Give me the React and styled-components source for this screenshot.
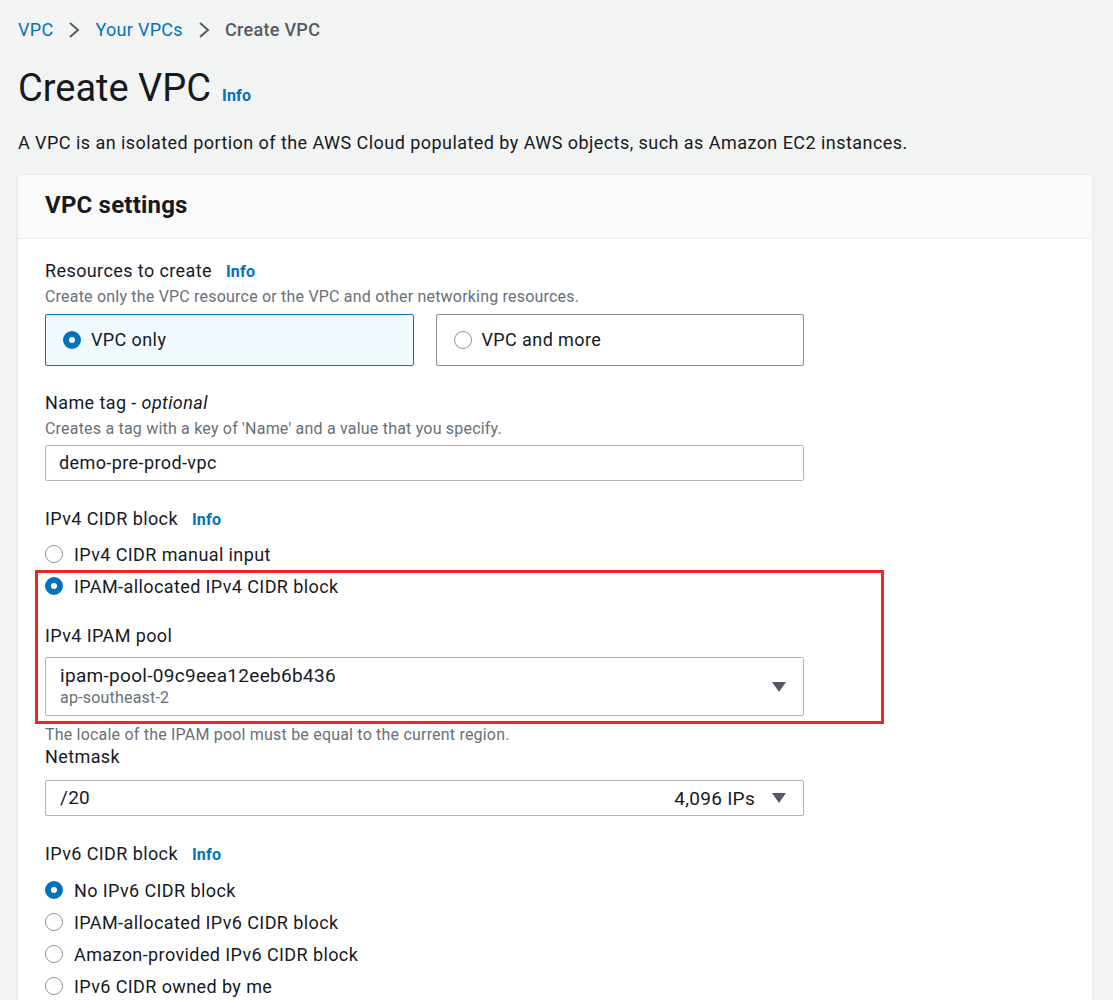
import React from 'react';
import styled, { createGlobalStyle } from 'styled-components';

const GlobalStyle = createGlobalStyle`
  body {
    margin: 0;
    background: #f2f3f3;
    font-family: Roboto, "Liberation Sans", Arial, sans-serif;
    color: #16191f;
  }
`;

const Page = styled.div`
  padding: 19px 20px 0 17px;
`;

const Crumbs = styled.nav`
  display: flex;
  align-items: center;
  gap: 12px;
  font-size: 18px;
  line-height: 22px;
  letter-spacing: 0.3px;
  padding-left: 1px;
`;

const Crumb = styled.span`
  color: ${p => (p.current ? '#545b64' : '#0073bb')};
  font-weight: ${p => (p.current ? 500 : 400)};
`;

const Chevron = styled.svg`
  width: 14px;
  height: 18px;
  margin: 0 2px;
`;

const TitleRow = styled.div`
  display: flex;
  align-items: baseline;
  gap: 11px;
  margin-top: 25px;
  padding-left: 1px;
`;

const Title = styled.h1`
  margin: 0;
  font-size: 38px;
  line-height: 44px;
  font-weight: 400;
`;

const Info = styled.span`
  color: #0073bb;
  font-weight: 700;
  font-size: 16px;
  letter-spacing: 0.2px;
  margin-left: ${p => p.gap || 0}px;
`;

const Lead = styled.p`
  margin: 21px 0 0 1px;
  font-size: 18px;
  line-height: 24px;
  letter-spacing: 0.45px;
`;

const Card = styled.section`
  margin-top: 19px;
  background: #fff;
  border: 1px solid #eaeded;
  box-shadow: 0 1px 1px rgba(0, 28, 36, 0.2);
  height: 900px;
`;

const CardHeader = styled.header`
  background: #fafafa;
  border-bottom: 1px solid #eaeded;
  height: 64px;
  box-sizing: border-box;
  display: flex;
  align-items: center;
  padding: 0 0 3px 27px;
`;

const CardTitle = styled.h2`
  margin: 0;
  font-size: 24px;
  font-weight: 700;
  letter-spacing: 0.2px;
`;

const CardBody = styled.div`
  padding: 20px 27px;
  width: 759px;
`;

const Field = styled.div`
  margin-top: ${p => p.top || 0}px;
`;

const Label = styled.div`
  font-size: 18px;
  line-height: 24px;
  letter-spacing: 0.4px;
  display: flex;
  align-items: baseline;
`;

const Desc = styled.div`
  font-size: 16px;
  line-height: 20px;
  letter-spacing: 0.2px;
  color: #687078;
  margin-top: ${p => p.top || 0}px;
`;

const Tiles = styled.div`
  display: grid;
  grid-template-columns: 1fr 1fr;
  gap: 22px;
  margin-top: 7px;
`;

const Tile = styled.div`
  height: 52px;
  box-sizing: border-box;
  border: ${p => (p.selected ? '1px solid #0073bb' : '1px solid #879596')};
  background: ${p => (p.selected ? '#f1faff' : '#fff')};
  border-radius: 2px;
  display: flex;
  align-items: center;
  gap: 10px;
  padding: 0 0 1px 17px;
  font-size: 18px;
  letter-spacing: 0.4px;
`;

const Radio = styled.span`
  width: 18px;
  height: 18px;
  box-sizing: border-box;
  border-radius: 50%;
  flex: none;
  border: ${p => (p.checked ? '6px solid #0073bb' : '1.5px solid #879596')};
  background: #fff;
`;

const Input = styled.div`
  margin-top: 6px;
  height: 36px;
  box-sizing: border-box;
  border: 1px solid #aab7b8;
  border-radius: 2px;
  display: flex;
  align-items: center;
  padding: 0 13px 1px;
  font-size: 18px;
  letter-spacing: 0.4px;
`;

const Options = styled.div`
  margin-top: ${p => p.top || 6}px;
`;

const Option = styled.div`
  height: 32px;
  display: flex;
  align-items: center;
  gap: 11px;
  font-size: 18px;
  letter-spacing: 0.4px;
`;

const Highlight = styled.div`
  position: relative;
  &::after {
    content: '';
    position: absolute;
    top: 0;
    left: -10px;
    right: -80px;
    bottom: -8px;
    border: 3px solid #ee2724;
    pointer-events: none;
  }
`;

const Select = styled.div`
  margin-top: ${p => p.top || 6}px;
  height: ${p => p.h}px;
  box-sizing: border-box;
  border: 1px solid #aab7b8;
  border-radius: 2px;
  display: flex;
  align-items: center;
  padding: 0 17px 0 14px;
  gap: 17px;
`;

const SelectText = styled.div`
  flex: 1;
  display: flex;
  flex-direction: column;
`;

const Value = styled.span`
  font-size: 19px;
  line-height: 22px;
  letter-spacing: 0.3px;
`;

const Sub = styled.span`
  font-size: 16px;
  line-height: 22px;
  letter-spacing: 0.2px;
  color: #687078;
`;

const Tag = styled.span`
  font-size: 19px;
  letter-spacing: 0.3px;
`;

const Caret = () => (
  <svg width="14" height="10" viewBox="0 0 14 10">
    <path d="M0 0 H14 L7 10 Z" fill="#545b64" />
  </svg>
);

const Sep = () => (
  <Chevron viewBox="0 0 14 18">
    <path d="M3 2 L11 9 L3 16" fill="none" stroke="#545b64" strokeWidth="2" />
  </Chevron>
);

export default function App() {
  return (
    <>
      <GlobalStyle />
      <Page>
        <Crumbs>
          <Crumb>VPC</Crumb>
          <Sep />
          <Crumb>Your VPCs</Crumb>
          <Sep />
          <Crumb current>Create VPC</Crumb>
        </Crumbs>
        <TitleRow>
          <Title>Create VPC</Title>
          <Info>Info</Info>
        </TitleRow>
        <Lead>
          A VPC is an isolated portion of the AWS Cloud populated by AWS objects, such as Amazon EC2 instances.
        </Lead>
        <Card>
          <CardHeader>
            <CardTitle>VPC settings</CardTitle>
          </CardHeader>
          <CardBody>
            <Field>
              <Label>
                Resources to create<Info gap={14}>Info</Info>
              </Label>
              <Desc top={3}>Create only the VPC resource or the VPC and other networking resources.</Desc>
              <Tiles>
                <Tile selected>
                  <Radio checked />
                  VPC only
                </Tile>
                <Tile>
                  <Radio />
                  VPC and more
                </Tile>
              </Tiles>
            </Field>

            <Field top={25}>
              <Label>
                Name tag -&nbsp;<i>optional</i>
              </Label>
              <Desc top={4}>Creates a tag with a key of 'Name' and a value that you specify.</Desc>
              <Input>demo-pre-prod-vpc</Input>
            </Field>

            <Field top={26}>
              <Label>
                IPv4 CIDR block<Info gap={14}>Info</Info>
              </Label>
              <Options>
                <Option>
                  <Radio />
                  IPv4 CIDR manual input
                </Option>
                <Highlight>
                  <Option>
                    <Radio checked />
                    IPAM-allocated IPv4 CIDR block
                  </Option>
                  <Field top={22}>
                    <Label>IPv4 IPAM pool</Label>
                    <Select h={59} top={9}>
                      <SelectText>
                        <Value>ipam-pool-09c9eea12eeb6b436</Value>
                        <Sub>ap-southeast-2</Sub>
                      </SelectText>
                      <Caret />
                    </Select>
                  </Field>
                </Highlight>
              </Options>
              <Desc top={9}>The locale of the IPAM pool must be equal to the current region.</Desc>
            </Field>

            <Field>
              <Label>Netmask</Label>
              <Select h={36} top={11}>
                <SelectText>
                  <Value>/20</Value>
                </SelectText>
                <Tag>4,096 IPs</Tag>
                <Caret />
              </Select>
            </Field>

            <Field top={26}>
              <Label>
                IPv6 CIDR block<Info gap={14}>Info</Info>
              </Label>
              <Options top={7}>
                <Option>
                  <Radio checked />
                  No IPv6 CIDR block
                </Option>
                <Option>
                  <Radio />
                  IPAM-allocated IPv6 CIDR block
                </Option>
                <Option>
                  <Radio />
                  Amazon-provided IPv6 CIDR block
                </Option>
                <Option>
                  <Radio />
                  IPv6 CIDR owned by me
                </Option>
              </Options>
            </Field>
          </CardBody>
        </Card>
      </Page>
    </>
  );
}
